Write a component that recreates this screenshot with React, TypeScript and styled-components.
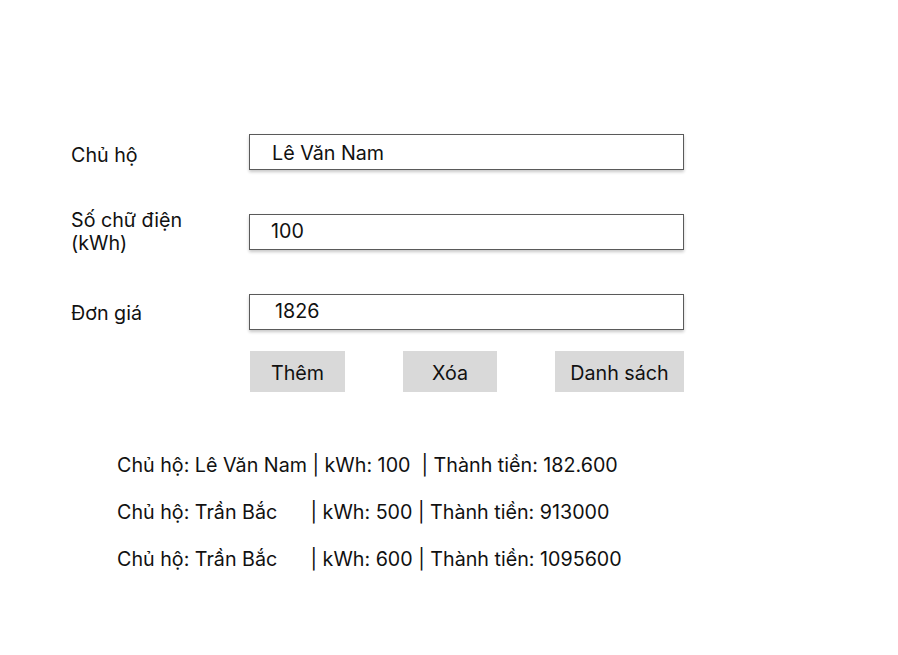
import React from "react";
import styled, { createGlobalStyle } from "styled-components";

const GlobalStyle = createGlobalStyle`
  html, body {
    margin: 0;
    padding: 0;
    background: #ffffff;
  }
  body {
    font-family: Inter, "Noto Sans", sans-serif;
    color: #111111;
  }
`;

type Field = {
  label: string[];
  labelShift: number;
  value: string;
  indent: number;
  lift: number;
};

const fields: Field[] = [
  { label: ["Chủ hộ"], labelShift: 6, value: "Lê Văn Nam", indent: 22, lift: 1 },
  { label: ["Số chữ điện", "(kWh)"], labelShift: 0, value: "100", indent: 21, lift: 6 },
  { label: ["Đơn giá"], labelShift: 2, value: "1826", indent: 25, lift: 5 },
];

const records = [
  "Chủ hộ: Lê Văn Nam | kWh: 100  | Thành tiền: 182.600",
  "Chủ hộ: Trần Bắc      | kWh: 500 | Thành tiền: 913000",
  "Chủ hộ: Trần Bắc      | kWh: 600 | Thành tiền: 1095600",
];

const App = () => {
  return (
    <>
      <GlobalStyle />
      <Page>
        <Form>
          {fields.map((f) => (
            <React.Fragment key={f.value}>
              <Label shift={f.labelShift}>
                {f.label.map((line) => (
                  <div key={line}>{line}</div>
                ))}
              </Label>
              <InputBox indent={f.indent} lift={f.lift}>
                {f.value}
              </InputBox>
            </React.Fragment>
          ))}
        </Form>
        <Actions>
          <Button width={95}>Thêm</Button>
          <Button width={94}>Xóa</Button>
          <Button width={129}>Danh sách</Button>
        </Actions>
        <Results>
          {records.map((r, i) => (
            <ResultLine key={i}>{r}</ResultLine>
          ))}
        </Results>
      </Page>
    </>
  );
};

export default App;

const Page = styled.div`
  width: 898px;
  height: 655px;
  box-sizing: border-box;
  padding: 134px 0 0 71px;
  font-size: 19.7px;
`;

const Form = styled.div`
  display: grid;
  grid-template-columns: 178px 435px;
  grid-auto-rows: 36px;
  row-gap: 44px;
`;

const Label = styled.div<{ shift: number }>`
  height: 36px;
  display: flex;
  flex-direction: column;
  justify-content: center;
  line-height: 23px;
  padding-top: ${({ shift }) => shift}px;
  box-sizing: border-box;
`;

const InputBox = styled.div<{ indent: number; lift: number }>`
  box-sizing: border-box;
  height: 36px;
  border: 1px solid #5a5a5a;
  box-shadow: 0 2px 3px rgba(0, 0, 0, 0.22);
  display: flex;
  align-items: center;
  padding-left: ${({ indent }) => indent}px;
  padding-top: 3px;
  padding-bottom: ${({ lift }) => lift}px;
  background: #ffffff;
`;

const Actions = styled.div`
  display: flex;
  justify-content: space-between;
  width: 434px;
  margin: 21px 0 0 179px;
`;

const Button = styled.div<{ width: number }>`
  width: ${({ width }) => width}px;
  height: 41px;
  padding-top: 2px;
  box-sizing: border-box;
  background: #d9d9d9;
  display: flex;
  align-items: center;
  justify-content: center;
`;

const Results = styled.div`
  margin: 50px 0 0 46px;
`;

const ResultLine = styled.div`
  height: 47px;
  line-height: 47px;
  white-space: pre;
`;
